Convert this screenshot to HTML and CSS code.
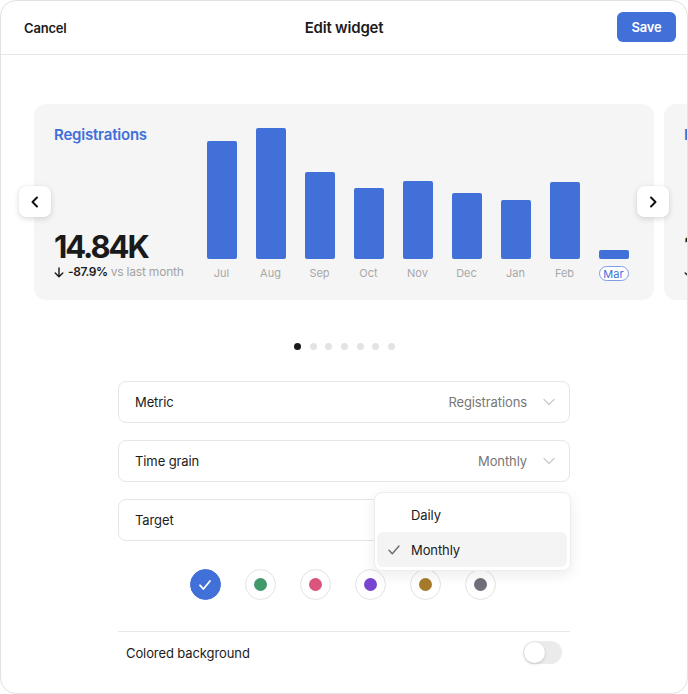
FILE: index.html
```html
<!DOCTYPE html>
<html>
<head>
<meta charset="utf-8">
<link rel="stylesheet" href="styles.css">
</head>
<body>
<div class="modal">
  <header class="header">
    <button class="btn-text">Cancel</button>
    <h1 class="title">Edit widget</h1>
    <button class="btn-save">Save</button>
  </header>

  <section class="carousel">
    <div class="track">
      <div class="card">
        <div class="summary">
          <div class="card-title">Registrations</div>
          <div class="figure">
            <div class="value">14.84K</div>
            <div class="delta">
              <svg class="arrow-down" width="10" height="11" viewBox="0 0 10 11"><path d="M5 1v8.5M1.2 6l3.8 3.8L8.8 6" fill="none" stroke="#1a1a1a" stroke-width="1.4" stroke-linecap="round" stroke-linejoin="round"/></svg>
              <b>-87.9%</b> <span>vs last month</span>
            </div>
          </div>
        </div>
        <div class="chart">
          <div class="col"><div class="bar-area"><div class="bar" style="height:118px"></div></div><div class="lbl">Jul</div></div>
          <div class="col"><div class="bar-area"><div class="bar" style="height:131px"></div></div><div class="lbl">Aug</div></div>
          <div class="col"><div class="bar-area"><div class="bar" style="height:87px"></div></div><div class="lbl">Sep</div></div>
          <div class="col"><div class="bar-area"><div class="bar" style="height:71px"></div></div><div class="lbl">Oct</div></div>
          <div class="col"><div class="bar-area"><div class="bar" style="height:78px"></div></div><div class="lbl">Nov</div></div>
          <div class="col"><div class="bar-area"><div class="bar" style="height:66px"></div></div><div class="lbl">Dec</div></div>
          <div class="col"><div class="bar-area"><div class="bar" style="height:59px"></div></div><div class="lbl">Jan</div></div>
          <div class="col"><div class="bar-area"><div class="bar" style="height:77px"></div></div><div class="lbl">Feb</div></div>
          <div class="col"><div class="bar-area"><div class="bar" style="height:9px"></div></div><div class="lbl current">Mar</div></div>
        </div>
      </div>
      <div class="card">
        <div class="summary">
          <div class="card-title">Registrations</div>
          <div class="figure">
            <div class="value">14.84K</div>
            <div class="delta">
              <svg class="arrow-down" width="10" height="11" viewBox="0 0 10 11"><path d="M5 1v8.5M1.2 6l3.8 3.8L8.8 6" fill="none" stroke="#1a1a1a" stroke-width="1.4" stroke-linecap="round" stroke-linejoin="round"/></svg>
              <b>-87.9%</b> <span>vs last month</span>
            </div>
          </div>
        </div>
      </div>
    </div>
    <button class="nav nav-prev"><svg width="14" height="14" viewBox="0 0 14 14"><path d="M9 2.5L4.5 7 9 11.5" fill="none" stroke="#111" stroke-width="2" stroke-linecap="round" stroke-linejoin="round"/></svg></button>
    <button class="nav nav-next"><svg width="14" height="14" viewBox="0 0 14 14"><path d="M5 2.5L9.5 7 5 11.5" fill="none" stroke="#111" stroke-width="2" stroke-linecap="round" stroke-linejoin="round"/></svg></button>
  </section>

  <div class="dots">
    <span class="dot active"></span><span class="dot"></span><span class="dot"></span><span class="dot"></span><span class="dot"></span><span class="dot"></span><span class="dot"></span>
  </div>

  <section class="form">
    <div class="field">
      <span class="field-label">Metric</span>
      <span class="field-value">Registrations</span>
      <svg class="chev" width="12" height="8" viewBox="0 0 12 8"><path d="M1 1.5l5 5 5-5" fill="none" stroke="#c9c9c9" stroke-width="1.2" stroke-linecap="round" stroke-linejoin="round"/></svg>
    </div>
    <div class="field">
      <span class="field-label">Time grain</span>
      <span class="field-value">Monthly</span>
      <svg class="chev" width="12" height="8" viewBox="0 0 12 8"><path d="M1 1.5l5 5 5-5" fill="none" stroke="#c9c9c9" stroke-width="1.2" stroke-linecap="round" stroke-linejoin="round"/></svg>
    </div>
    <div class="field field-target">
      <span class="field-label">Target</span>
      <div class="menu">
        <div class="menu-item"><span class="check"></span>Daily</div>
        <div class="menu-item selected"><span class="check"><svg width="12" height="10" viewBox="0 0 12 10"><path d="M1 5.2l3.3 3.6L11 1" fill="none" stroke="#6b6b6b" stroke-width="1.4" stroke-linecap="round" stroke-linejoin="round"/></svg></span>Monthly</div>
      </div>
    </div>

    <div class="swatches">
      <span class="swatch selected"><svg width="14" height="12" viewBox="0 0 14 12"><path d="M2 6.3l3.4 3.7L12 2" fill="none" stroke="#fff" stroke-width="1.8" stroke-linecap="round" stroke-linejoin="round"/></svg></span>
      <span class="swatch"><i class="sw-green"></i></span>
      <span class="swatch"><i class="sw-pink"></i></span>
      <span class="swatch"><i class="sw-purple"></i></span>
      <span class="swatch"><i class="sw-gold"></i></span>
      <span class="swatch"><i class="sw-gray"></i></span>
    </div>

    <div class="toggle-row">
      <span class="toggle-label">Colored background</span>
      <span class="toggle"><span class="knob"></span></span>
    </div>
  </section>
</div>
</body>
</html>
```

FILE: styles.css
```css
* { box-sizing: border-box; }
html, body { margin: 0; padding: 0; background: #fff; }
body { font-family: Inter, "Noto Sans", "Liberation Sans", sans-serif; color: #1b1b1b; }

.modal {
  width: 688px;
  height: 694px;
  border: 1px solid #e2e2e2;
  border-radius: 16px;
  overflow: hidden;
  background: #fff;
  position: relative;
}

.header {
  height: 54px;
  border-bottom: 1px solid #e6e6e6;
  display: flex;
  align-items: center;
  justify-content: space-between;
  padding: 0 11px 0 23px;
  position: relative;
}
.btn-text {
  border: 0; background: none; padding: 0;
  font: 600 13px Inter, sans-serif; color: #1b1b1b;
  letter-spacing: -0.2px;
}
.title {
  position: absolute; left: 0; right: 0; text-align: center;
  margin: 0; font-size: 15px; font-weight: 600; letter-spacing: -0.2px;
  pointer-events: none;
}
.btn-save {
  width: 59px; height: 30px; border: 0; border-radius: 6px;
  background: #4170d8; color: #fff;
  font: 600 13px Inter, sans-serif; letter-spacing: -0.2px;
  margin-top: -1px;
}

.carousel {
  position: relative;
  margin-top: 49px;
  padding-left: 33px;
}
.track {
  display: flex;
  gap: 10px;
}
.card {
  flex: 0 0 620px;
  height: 196px;
  background: #f5f5f5;
  border-radius: 12px;
  padding: 22px 16px 19px 20px;
  display: flex;
  justify-content: space-between;
}
.summary {
  display: flex;
  flex-direction: column;
  justify-content: space-between;
  padding-bottom: 1px;
}
.card-title {
  color: #3f6fd8; font-size: 15px; font-weight: 600; line-height: 18px;
  letter-spacing: -0.2px;
}
.value {
  font-size: 31px; font-weight: 700; line-height: 32px; letter-spacing: -2.1px;
  color: #1a1a1a;
}
.delta {
  font-size: 12px; line-height: 16px; margin-top: 1px; color: #a3a3a3;
  display: flex; align-items: center; gap: 3px; letter-spacing: -0.2px;
  white-space: nowrap;
}
.delta b { color: #1a1a1a; font-weight: 600; letter-spacing: -0.4px; }
.arrow-down { margin-right: 1px; }

.chart {
  display: flex;
  align-self: flex-end;
}
.col {
  width: 49px;
  display: flex;
  flex-direction: column;
  align-items: center;
}
.bar-area {
  height: 131px;
  display: flex;
  align-items: flex-end;
}
.bar {
  width: 30px;
  background: #4170d8;
  border-radius: 2px;
}
.lbl {
  margin-top: 7px;
  height: 15px;
  line-height: 14px;
  font-size: 11px;
  color: #a8a8a8;
  padding: 0 4px;
}
.lbl.current {
  color: #3f6fd8;
  border: 1px solid #7d9ee6;
  border-radius: 8px;
  background: #fff;
  width: 30px;
  text-align: center;
  padding: 0;
}

.nav {
  position: absolute;
  top: 82px;
  width: 32px; height: 31px;
  border: 0; border-radius: 7px;
  background: #fff;
  box-shadow: 0 2px 6px rgba(0,0,0,0.14), 0 0 1px rgba(0,0,0,0.1);
  display: flex; align-items: center; justify-content: center;
  padding: 0;
}
.nav-prev { left: 18px; }
.nav-next { left: 636px; }

.dots {
  display: flex;
  justify-content: center;
  gap: 8.7px;
  margin-top: 43px;
  height: 7px;
  padding-left: 1px;
}
.dot { width: 7px; height: 7px; border-radius: 50%; background: #e3e3e3; }
.dot.active { background: #1a1a1a; }

.form {
  width: 452px;
  margin: 31px 0 0 117px;
  display: flex;
  flex-direction: column;
}
.field {
  height: 42px;
  border: 1px solid #e6e6e6;
  border-radius: 8px;
  display: flex;
  align-items: center;
  padding: 0 14px 0 16px;
  margin-bottom: 17px;
  position: relative;
}
.field-label { font-size: 13px; color: #1b1b1b; flex: 1; letter-spacing: -0.1px; }
.field-value { font-size: 13px; color: #777; margin-right: 16px; letter-spacing: -0.1px; }
.chev { display: block; }
.field-target { margin-bottom: 0; }

.menu {
  position: absolute;
  left: 255px;
  top: -8px;
  width: 197px;
  background: #fff;
  border: 1px solid #ededed;
  border-radius: 8px;
  box-shadow: 0 4px 14px rgba(0,0,0,0.08);
  padding: 4px 3px 3px 2px;
  z-index: 5;
}
.menu-item {
  height: 35px;
  display: flex;
  align-items: center;
  font-size: 13px;
  color: #1b1b1b;
  border-radius: 6px;
  padding-left: 11px;
  letter-spacing: -0.1px;
}
.menu-item.selected { background: #f4f4f4; }
.check { width: 23px; display: flex; align-items: center; }

.swatches {
  display: flex;
  justify-content: center;
  gap: 24px;
  margin-top: 28px;
  padding-right: 3px;
}
.swatch {
  width: 31px; height: 31px; border-radius: 50%;
  border: 1px solid #e3e3e3;
  display: flex; align-items: center; justify-content: center;
  background: #fff;
}
.swatch.selected { background: #4170d8; border-color: #4170d8; }
.swatch i { width: 13px; height: 13px; border-radius: 50%; display: block; }
.sw-green { background: #41996a; }
.sw-pink { background: #d9557c; }
.sw-purple { background: #7844cf; }
.sw-gold { background: #a67b2b; }
.sw-gray { background: #6f7079; }

.toggle-row {
  margin-top: 31px;
  border-top: 1px solid #e8e8e8;
  height: 42px;
  display: flex;
  align-items: center;
  justify-content: space-between;
  padding: 0 8px;
}
.toggle-label { font-size: 13px; color: #1b1b1b; letter-spacing: -0.1px; }
.toggle {
  width: 39px; height: 23px; border-radius: 12px;
  background: #ebebeb;
  padding: 1px;
  display: flex;
}
.knob {
  width: 21px; height: 21px; border-radius: 50%;
  background: #fff;
  box-shadow: 0 1px 3px rgba(0,0,0,0.18);
}
```
